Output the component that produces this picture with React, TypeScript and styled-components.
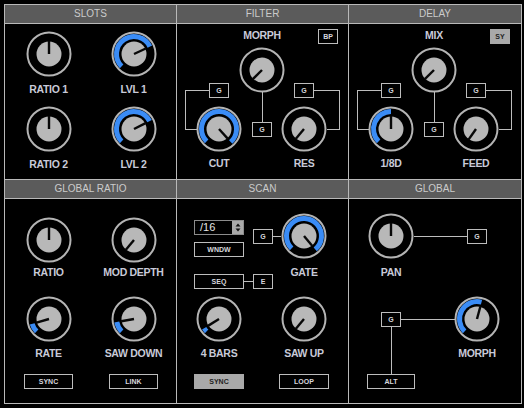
import React from "react";
import styled, { createGlobalStyle } from "styled-components";

const LINE = "#b9b9b9";
const WIRE = "#bdbdbd";

const GlobalStyle = createGlobalStyle`
  *, *::before, *::after { box-sizing: border-box; }
  html, body { margin: 0; padding: 0; background: #000; }
  body {
    width: 524px;
    height: 408px;
    overflow: hidden;
    font-family: "Liberation Sans", Arial, sans-serif;
  }
`;

const Frame = styled.div`
  display: grid;
  grid-template-columns: 172px 172px 173px;
  width: max-content;
  margin: 4px 0 0 4px;
  border-left: 1px solid ${LINE};
  border-top: 1px solid ${LINE};
`;

const PanelBox = styled.section`
  display: flex;
  flex-direction: column;
  border-right: 1px solid ${LINE};
  border-bottom: 1px solid ${LINE};
`;

const Header = styled.div`
  height: 19px;
  line-height: 18px;
  background: #5b5b5b;
  border-bottom: 1px solid ${LINE};
  color: #cbcbcb;
  font-size: 10px;
  text-align: center;
`;

const Label = styled.div`
  font-size: 10.5px;
  line-height: 12px;
  font-weight: 700;
  letter-spacing: -0.3px;
  color: #c8cad8;
  white-space: nowrap;
`;

const Columns = styled.div<{ $h: number; $cols: string; $pl?: number }>`
  position: relative;
  height: ${(p) => p.$h}px;
  display: grid;
  grid-template-columns: ${(p) => p.$cols};
  padding-left: ${(p) => p.$pl ?? 0}px;
  align-items: start;
`;

const Stack = styled.div<{ $pt: number; $col?: number }>`
  grid-column: ${(p) => p.$col ?? "auto"};
  grid-row: 1;
  display: flex;
  flex-direction: column;
  align-items: center;
  padding-top: ${(p) => p.$pt}px;
`;

const Unit = styled.div<{ $gap: number; $mt: number }>`
  display: flex;
  flex-direction: column;
  align-items: center;
  gap: ${(p) => p.$gap}px;
  margin-top: ${(p) => p.$mt}px;
`;

const Btn = styled.div<{ $w: number; $on?: boolean; $mt?: number }>`
  width: ${(p) => p.$w}px;
  height: 15px;
  margin-top: ${(p) => p.$mt ?? 0}px;
  border: 1px solid ${(p) => (p.$on ? "#a9a9a9" : "#bdbdbd")};
  background: ${(p) => (p.$on ? "#a9a9a9" : "#000")};
  color: ${(p) => (p.$on ? "#1e1e1e" : "#d6d6dc")};
  font-size: 7px;
  font-weight: 700;
  display: flex;
  align-items: center;
  justify-content: center;
`;

const Wires = styled.svg`
  position: absolute;
  inset: 0;
  width: 100%;
  height: 100%;
  pointer-events: none;
  path {
    fill: none;
    stroke: ${WIRE};
    stroke-width: 1;
    shape-rendering: crispEdges;
  }
`;

const Dial = styled.svg`
  display: block;
  flex: none;
`;

const polar = (r: number, deg: number): [number, number] => {
  const a = ((deg - 90) * Math.PI) / 180;
  return [23 + r * Math.cos(a), 23 + r * Math.sin(a)];
};

const arc = (r: number, a0: number, a1: number) => {
  const [x0, y0] = polar(r, a0);
  const [x1, y1] = polar(r, a1);
  const large = a1 - a0 > 180 ? 1 : 0;
  return `M${x0} ${y0} A${r} ${r} 0 ${large} 1 ${x1} ${y1}`;
};

function Knob({ angle, lit }: { angle: number; lit?: boolean }) {
  const [tx, ty] = polar(13, angle);
  return (
    <Dial width={46} height={46} viewBox="0 0 46 46">
      <circle cx={23} cy={23} r={21.5} fill="none" stroke="#b4b4b4" strokeWidth={2} />
      {lit && (
        <path d={arc(17.5, -135, angle)} fill="none" stroke="#3a8cf6" strokeWidth={5} />
      )}
      <circle cx={23} cy={23} r={12.5} fill="#b8b8b8" />
      <line x1={23} y1={23} x2={tx} y2={ty} stroke="#080808" strokeWidth={2.4} />
    </Dial>
  );
}

type ControlProps = {
  label: string;
  angle: number;
  lit?: boolean;
  gap: number;
  mt?: number;
};

function Control({ label, angle, lit, gap, mt = 0 }: ControlProps) {
  return (
    <Unit $gap={gap} $mt={mt}>
      <Knob angle={angle} lit={lit} />
      <Label>{label}</Label>
    </Unit>
  );
}

function Panel({ title, children }: { title: string; children: React.ReactNode }) {
  return (
    <PanelBox>
      <Header>{title}</Header>
      {children}
    </PanelBox>
  );
}

/* filter / delay: a main knob feeding two side knobs through G sends */
const ModGrid = styled.div`
  position: relative;
  height: 155px;
  display: grid;
  grid-template-columns: 84px 86px;
  grid-template-rows: 22px 60px 46px 17px;
`;

const ModTitle = styled(Label)`
  grid-column: 1 / -1;
  grid-row: 1;
  justify-self: center;
  align-self: center;
`;

const ToggleCell = styled.div`
  grid-column: 2;
  grid-row: 1;
  justify-self: end;
  align-self: end;
  margin: 0 9px 2px 0;
`;

const MainKnob = styled.div`
  grid-column: 1 / -1;
  grid-row: 2;
  justify-self: center;
  margin-top: 1px;
`;

const SendCell = styled.div<{ $col: number }>`
  grid-column: ${(p) => p.$col};
  grid-row: 2;
  justify-self: center;
  align-self: end;
  margin-bottom: 8px;
`;

const CenterSend = styled.div`
  grid-column: 1 / -1;
  grid-row: 3;
  justify-self: center;
  margin-top: 16px;
`;

const SideKnob = styled.div<{ $col: number }>`
  grid-column: ${(p) => p.$col};
  grid-row: 3;
  justify-self: center;
`;

const SideLabel = styled(Label)<{ $col: number }>`
  grid-column: ${(p) => p.$col};
  grid-row: 4;
  justify-self: center;
  align-self: end;
`;

type ModProps = {
  title: string;
  toggle: string;
  toggleOn?: boolean;
  main: number;
  left: { label: string; angle: number; lit?: boolean };
  right: { label: string; angle: number; lit?: boolean };
};

function ModBody({ title, toggle, toggleOn, main, left, right }: ModProps) {
  return (
    <ModGrid>
      <Wires>
        <path d="M32 66.5H8.5V105.5H19.5" />
        <path d="M137 66.5H162.5V105.5H150" />
        <path d="M85.5 68V98" />
      </Wires>
      <ModTitle>{title}</ModTitle>
      <ToggleCell>
        <Btn $w={20} $on={toggleOn}>
          {toggle}
        </Btn>
      </ToggleCell>
      <MainKnob>
        <Knob angle={main} />
      </MainKnob>
      <SendCell $col={1}>
        <Btn $w={20}>G</Btn>
      </SendCell>
      <SendCell $col={2}>
        <Btn $w={20}>G</Btn>
      </SendCell>
      <SideKnob $col={1}>
        <Knob angle={left.angle} lit={left.lit} />
      </SideKnob>
      <CenterSend>
        <Btn $w={20}>G</Btn>
      </CenterSend>
      <SideKnob $col={2}>
        <Knob angle={right.angle} lit={right.lit} />
      </SideKnob>
      <SideLabel $col={1}>{left.label}</SideLabel>
      <SideLabel $col={2}>{right.label}</SideLabel>
    </ModGrid>
  );
}

/* scan step select */
const Select = styled.div`
  width: 50px;
  height: 15px;
  display: flex;
  border: 1px solid #8c8c8c;
  background: #000;
`;

const SelectValue = styled.span`
  flex: 1;
  padding-left: 5px;
  font-size: 11px;
  line-height: 13px;
  color: #e4e4e4;
`;

const SelectArrows = styled.span`
  width: 11px;
  background: #a9a9a9;
  display: flex;
  align-items: center;
  justify-content: center;
`;

function StepSelect({ value }: { value: string }) {
  return (
    <Select>
      <SelectValue>{value}</SelectValue>
      <SelectArrows>
        <svg width="6" height="9" viewBox="0 0 6 9">
          <path d="M3 0.5L5.5 3.5H0.5Z" fill="#111" />
          <path d="M3 8.5L5.5 5.5H0.5Z" fill="#111" />
        </svg>
      </SelectArrows>
    </Select>
  );
}

export default function App() {
  return (
    <>
      <GlobalStyle />
      <Frame>
        <Panel title="SLOTS">
          <Columns $h={155} $cols="85px 85px" $pl={1}>
            <Stack $pt={7}>
              <Control label="RATIO 1" angle={0} gap={6} />
              <Control label="RATIO 2" angle={0} gap={6} mt={11} />
            </Stack>
            <Stack $pt={7}>
              <Control label="LVL 1" angle={65} lit gap={6} />
              <Control label="LVL 2" angle={63} lit gap={6} mt={11} />
            </Stack>
          </Columns>
        </Panel>

        <Panel title="FILTER">
          <ModBody
            title="MORPH"
            toggle="BP"
            main={-135}
            left={{ label: "CUT", angle: 138, lit: true }}
            right={{ label: "RES", angle: -140 }}
          />
        </Panel>

        <Panel title="DELAY">
          <ModBody
            title="MIX"
            toggle="SY"
            toggleOn
            main={-135}
            left={{ label: "1/8D", angle: 0, lit: true }}
            right={{ label: "FEED", angle: -145 }}
          />
        </Panel>

        <Panel title="GLOBAL RATIO">
          <Columns $h={204} $cols="85px 85px" $pl={1}>
            <Stack $pt={18}>
              <Control label="RATIO" angle={0} gap={3} />
              <Control label="RATE" angle={-106} lit gap={5} mt={18} />
              <Btn $w={49} $mt={15}>SYNC</Btn>
            </Stack>
            <Stack $pt={18}>
              <Control label="MOD DEPTH" angle={-140} gap={3} />
              <Control label="SAW DOWN" angle={-100} lit gap={5} mt={18} />
              <Btn $w={49} $mt={15}>LINK</Btn>
            </Stack>
          </Columns>
        </Panel>

        <Panel title="SCAN">
          <Columns $h={204} $cols="50px 9px 20px 6px 50px" $pl={17}>
            <Wires>
              <path d="M96 37.5H104" />
              <path d="M67 82.5H76" />
            </Wires>
            <Stack $col={1} $pt={21}>
              <StepSelect value="/16" />
              <Btn $w={50} $mt={7}>WNDW</Btn>
              <Btn $w={50} $mt={17}>SEQ</Btn>
              <Control label="4 BARS" angle={-122} lit gap={5} mt={7} />
              <Btn $w={50} $mt={15} $on>SYNC</Btn>
            </Stack>
            <Stack $col={3} $pt={30}>
              <Btn $w={20}>G</Btn>
              <Btn $w={20} $mt={30}>E</Btn>
            </Stack>
            <Stack $col={5} $pt={14}>
              <Control label="GATE" angle={140} lit gap={7} />
              <Control label="SAW UP" angle={-140} gap={5} mt={18} />
              <Btn $w={50} $mt={15}>LOOP</Btn>
            </Stack>
          </Columns>
        </Panel>

        <Panel title="GLOBAL">
          <Columns $h={204} $cols="84px 88px">
            <Wires>
              <path d="M65 37.5H118" />
              <path d="M52 120.5H105.5" />
              <path d="M42.5 128V175" />
            </Wires>
            <Stack $pt={14}>
              <Control label="PAN" angle={0} gap={7} />
              <Btn $w={20} $mt={34}>G</Btn>
              <Btn $w={48} $mt={47}>ALT</Btn>
            </Stack>
            <Stack $pt={30}>
              <Btn $w={20}>G</Btn>
              <Control label="MORPH" angle={15} lit gap={5} mt={52} />
            </Stack>
          </Columns>
        </Panel>
      </Frame>
    </>
  );
}
